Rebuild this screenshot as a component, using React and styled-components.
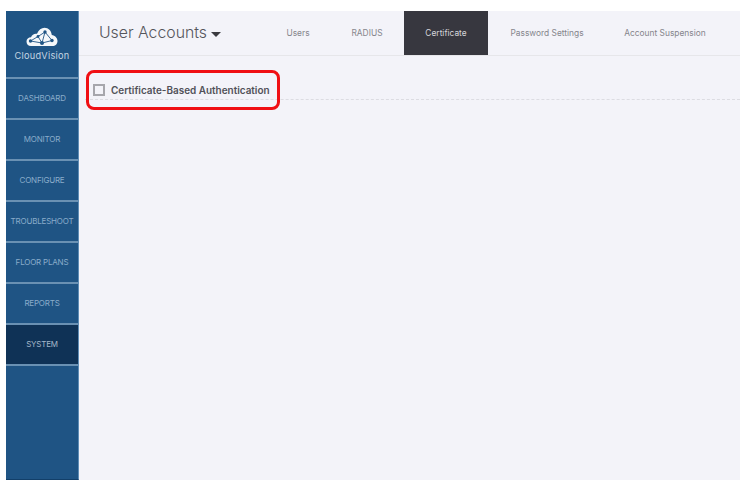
import React from "react";
import styled, { createGlobalStyle } from "styled-components";

const Global = createGlobalStyle`
  html, body { margin: 0; padding: 0; background: #fff; }
  body { font-family: Inter, "Liberation Sans", sans-serif; }
  * { box-sizing: border-box; }
`;
const Page = styled.div`
  width: 750px; height: 489px; padding: 11px 10px 9px 6px; background: #fff; overflow: hidden;
`;
const Frame = styled.div`
  display: flex; height: 469px; background: #f3f3f9;
`;
const Sidebar = styled.nav`
  width: 73px; flex: none; display: flex; flex-direction: column;
  background: #1f5484; border-right: 1px solid #5f8db5; border-bottom: 1px solid #123f69;
`;
const Logo = styled.div`
  height: 68px; flex: none; display: flex; flex-direction: column; align-items: center;
  padding-top: 16px; border-bottom: 2px solid #6a91b3;
  color: #c4d4e2;
`;
const LogoText = styled.span`
  font-size: 9.2px; line-height: 12px; margin-top: 3px; letter-spacing: 0.25px;
`;
const Item = styled.div`
  height: 41px; flex: none; display: flex; align-items: center; justify-content: center;
  padding-bottom: 2px;
  font-size: 8px; letter-spacing: -0.2px; white-space: nowrap;
  color: ${p => (p.$active ? "#a4b7c9" : "#8aacca")};
  background: ${p => (p.$active ? "#0f3256" : "transparent")};
  border-bottom: 2px solid #6a91b3;
`;
const Main = styled.main`
  flex: 1; min-width: 0; display: flex; flex-direction: column;
`;
const Header = styled.header`
  height: 45px; flex: none; display: flex; align-items: stretch;
  padding-left: 20px; border-bottom: 1px solid #e6e6ea;
`;
const Title = styled.div`
  width: 167px; flex: none; display: flex; align-items: center; gap: 4px; padding-bottom: 1px;
  font-size: 15.8px; font-weight: 300; color: #55565c; white-space: nowrap;
`;
const Caret = styled.span`
  width: 0; height: 0; margin-top: 3px; border-left: 5px solid transparent; border-right: 5px solid transparent;
  border-top: 5px solid #3a3a40;
`;
const Tabs = styled.div`
  display: flex; align-items: stretch;
`;
const Tab = styled.div`
  width: ${p => p.$w}px; height: 44px; display: flex; align-items: center; justify-content: center;
  font-size: 8.4px; white-space: nowrap;
  color: ${p => (p.$active ? "#d5d5da" : "#85858c")};
  background: ${p => (p.$active ? "#37373f" : "transparent")};
`;
const Body = styled.section`
  padding: 20px 0 0 6px;
`;
const Row = styled.div`
  position: relative; height: 24px; border-bottom: 1px dashed #dcdce2;
  display: flex; align-items: flex-start; gap: 6px; padding: 8px 0 0 8px;
`;
const Check = styled.span`
  width: 12px; height: 12px; flex: none; border: 2px solid #a6a6ac; background: #f3f3f9;
`;
const Label = styled.span`
  font-size: 9.95px; line-height: 12px; font-weight: 600; color: #515158; white-space: nowrap;
`;
const Highlight = styled.div`
  position: absolute; left: 1px; top: -6px; width: 194px; height: 40px;
  border: 3px solid #f00f14; border-radius: 8px;
`;

const nav = ["DASHBOARD", "MONITOR", "CONFIGURE", "TROUBLESHOOT", "FLOOR PLANS", "REPORTS", "SYSTEM"];
const tabs = [["Users", 64], ["RADIUS", 74], ["Certificate", 84], ["Password Settings", 118], ["Account Suspension", 118]];

const CloudLogo = () => (
  <svg width="32" height="20" viewBox="0 0 32 20" aria-hidden="true">
    <path fill="#f4f7fa" d="M5 19C2 19 0.5 17 0.5 14.5C0.5 12 2.5 10.2 5 10.2C6 7.5 8.5 6.3 11 6.8C12.5 3 15.5 0.8 18.5 0.8C22.500 0.8 25.3 3.8 25.8 8C29 8.5 31.5 11 31.5 14C31.5 17 29.3 19 26.5 19Z" />
    <g stroke="#1f5484" strokeWidth="0.9" fill="none">
      <path d="M4.5 14L16 16L26 13.5L19 5L16 16L12 9.5L4.5 14M12 9.5L19 5" />
    </g>
    <g fill="#1f5484">
      <circle cx="4.5" cy="14" r="1.7" /><circle cx="16" cy="16" r="2" /><circle cx="26" cy="13.5" r="1.7" />
      <circle cx="19" cy="5" r="1.7" /><circle cx="12" cy="9.5" r="1.4" />
    </g>
  </svg>
);

export default function App() {
  return (
    <Page>
      <Global />
      <Frame>
        <Sidebar>
          <Logo>
            <CloudLogo />
            <LogoText>CloudVision</LogoText>
          </Logo>
          {nav.map(n => <Item key={n} $active={n === "SYSTEM"}>{n}</Item>)}
        </Sidebar>
        <Main>
          <Header>
            <Title>User Accounts <Caret /></Title>
            <Tabs>
              {tabs.map(([t, w]) => <Tab key={t} $w={w} $active={t === "Certificate"}>{t}</Tab>)}
            </Tabs>
          </Header>
          <Body>
            <Row>
              <Check />
              <Label>Certificate-Based Authentication</Label>
              <Highlight />
            </Row>
          </Body>
        </Main>
      </Frame>
    </Page>
  );
}
